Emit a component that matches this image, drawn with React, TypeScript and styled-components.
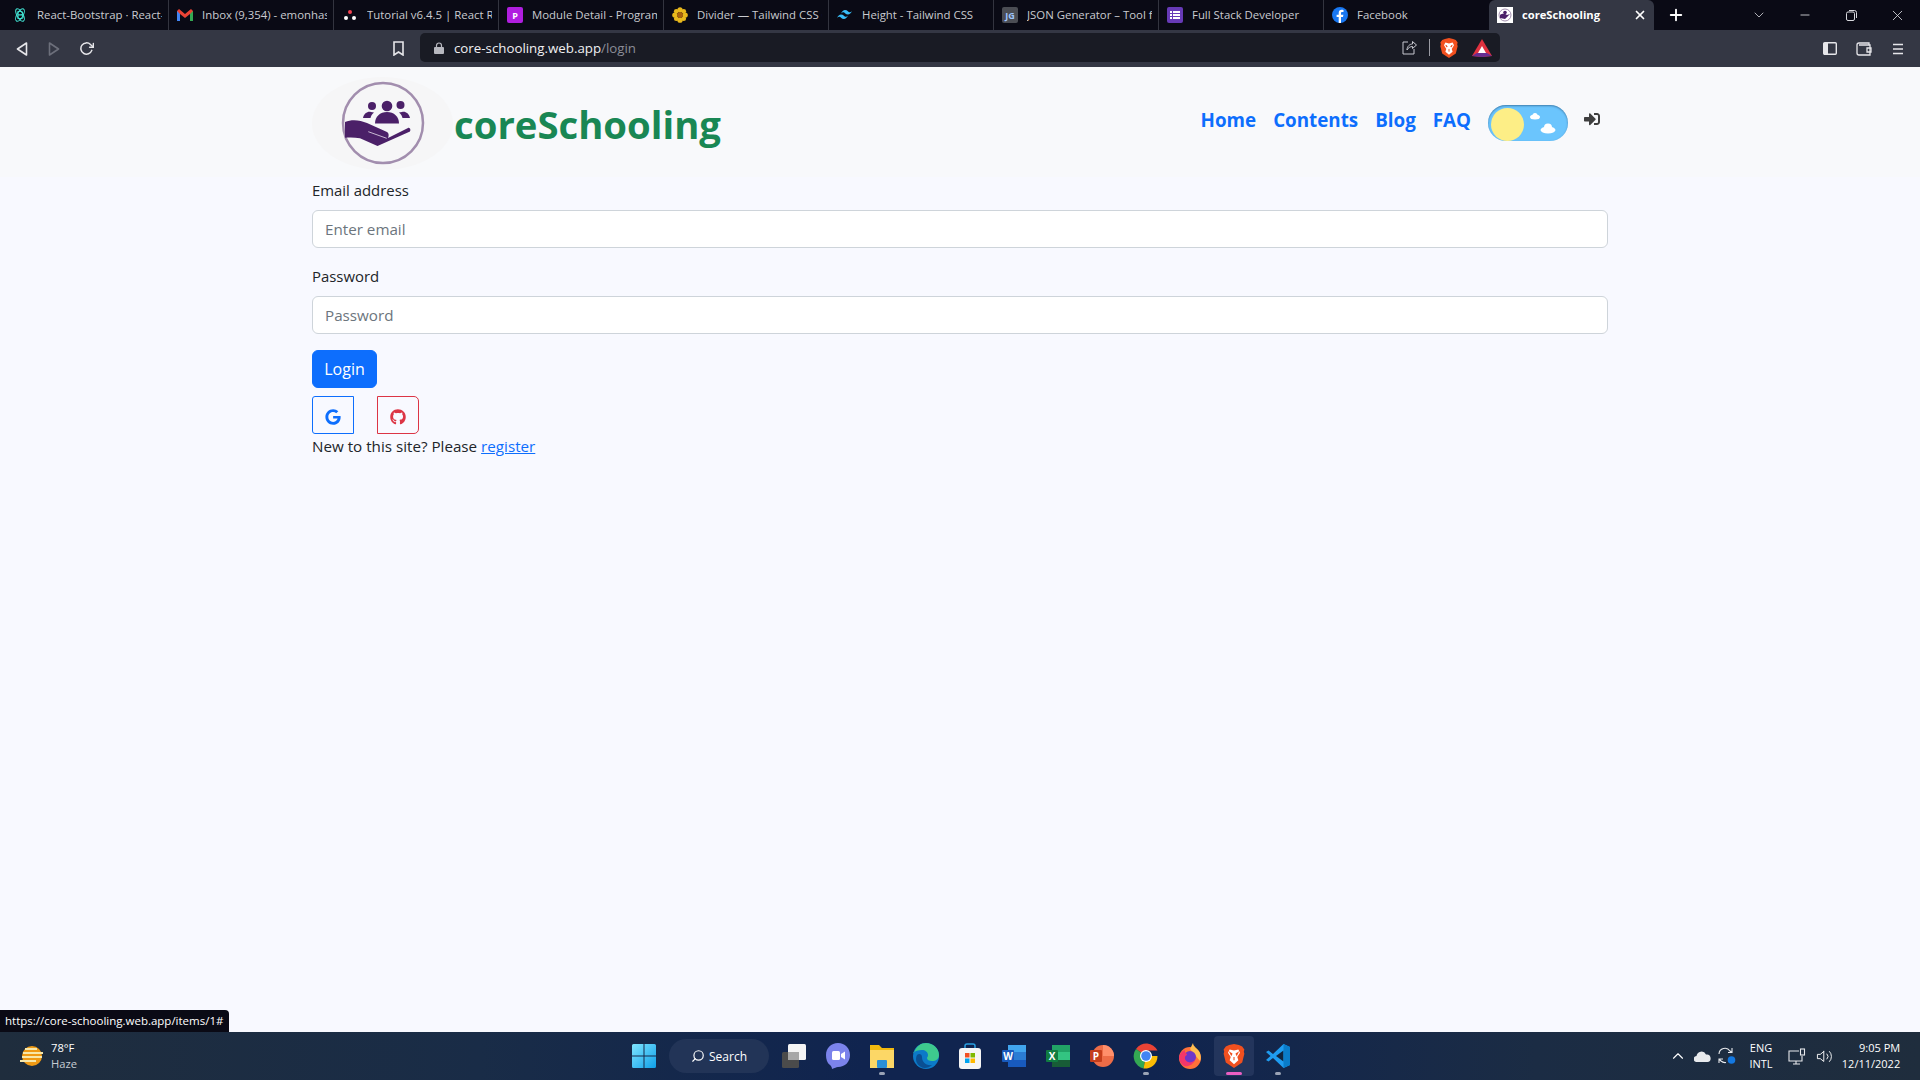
import React from "react";
import styled, { createGlobalStyle } from "styled-components";
import { FaGithub, FaGoogle, FaSignInAlt } from "react-icons/fa";
import { FiChevronDown, FiChevronUp, FiMinus, FiPlus, FiRotateCw, FiSearch, FiVolume2, FiX } from "react-icons/fi";

const UI_FONT = `"Open Sans", "Noto Sans", "Liberation Sans", sans-serif`;

const GlobalStyle = createGlobalStyle`
  html, body {
    margin: 0;
    padding: 0;
    height: 100%;
    overflow: hidden;
  }
  body {
    font-family: ${UI_FONT};
    background: #f8f9ff;
  }
  * {
    box-sizing: border-box;
  }
`;

const Screen = styled.div`
  position: relative;
  display: flex;
  flex-direction: column;
  width: 1920px;
  height: 1080px;
  overflow: hidden;
`;

/* tab strip */
const TabStrip = styled.div`
  display: flex;
  align-items: stretch;
  height: 30px;
  padding-left: 4px;
  background: #0a0a15;
  flex: none;
`;

const Tab = styled.div<{ $active?: boolean }>`
  display: flex;
  align-items: center;
  gap: 9px;
  width: 165px;
  padding: 0 6px 0 8px;
  font-size: ${p => (p.$active ? 11.2 : 11.4)}px;
  font-weight: ${p => (p.$active ? 700 : 400)};
  color: ${p => (p.$active ? "#fff" : "#c9cad0")};
  background: ${p => (p.$active ? "#343744" : "transparent")};
  border-radius: ${p => (p.$active ? "6px 6px 0 0" : "0")};
  border-right: 1px solid ${p => (p.$active ? "transparent" : "#33343f")};
  white-space: nowrap;
  overflow: hidden;

  &:nth-child(9) {
    border-right: none;
  }
`;

const TabTitle = styled.span`
  flex: 1;
  overflow: hidden;
  padding-bottom: 2px;
`;

const Favicon = styled.span`
  display: flex;
  align-items: center;
  justify-content: center;
  width: 16px;
  height: 16px;
  flex: none;
`;

const TabButton = styled.span`
  display: flex;
  align-items: center;
  justify-content: center;
  color: #fff;
  flex: none;
`;

const NewTab = styled.div`
  display: flex;
  align-items: center;
  justify-content: center;
  width: 44px;
  color: #fff;
  font-size: 18px;
`;

const WindowControls = styled.div`
  display: flex;
  align-items: center;
  margin-left: auto;
  color: #d8d9de;
`;

const WindowButton = styled.div`
  display: flex;
  align-items: center;
  justify-content: center;
  width: 46px;
  height: 30px;
  font-size: 15px;
`;

/* toolbar with address bar */
const Toolbar = styled.div`
  display: flex;
  align-items: center;
  height: 37px;
  padding: 0 0 0 13px;
  background: #343744;
  color: #e6e6ea;
  flex: none;
`;

const NavButtons = styled.div`
  display: flex;
  align-items: center;
  gap: 14px;
  width: 364px;
`;

const ToolIcon = styled.span<{ $dim?: boolean }>`
  display: flex;
  align-items: center;
  justify-content: center;
  width: 18px;
  height: 18px;
  color: ${p => (p.$dim ? "#6c6f7b" : "#e6e6ea")};
`;

const BookmarkSlot = styled.div`
  display: flex;
  justify-content: center;
  width: 43px;
`;

const AddressBar = styled.div`
  display: flex;
  align-items: center;
  gap: 10px;
  width: 1080px;
  height: 29px;
  padding: 0 8px 0 14px;
  margin-top: -2px;
  background: #191b24;
  border-radius: 5px;
  font-size: 13.3px;
`;

const UrlHost = styled.span`
  color: #f0f0f2;
`;

const UrlPath = styled.span`
  color: #8b8d97;
`;

const AddressIcons = styled.div`
  display: flex;
  align-items: center;
  gap: 9px;
  margin-left: auto;
`;

const AddressDivider = styled.span`
  width: 1px;
  height: 17px;
  margin: 0 0 0 3px;
  background: #9a9ba3;
`;

const ToolbarEnd = styled.div`
  display: flex;
  align-items: center;
  gap: 16px;
  margin-left: auto;
  padding-right: 16px;
`;

/* the site */
const Page = styled.main`
  flex: 1;
  display: flex;
  flex-direction: column;
  background: #f8f9ff;
  color: #212529;
  font-size: 15.2px;
  line-height: 24px;
`;

const HeaderBand = styled.header`
  display: flex;
  justify-content: center;
  height: 110px;
  background: #f8f9fb;
`;

const Container = styled.div`
  width: 1296px;
`;

const HeaderInner = styled(Container)`
  display: flex;
  align-items: flex-start;
  justify-content: space-between;
`;

const Brand = styled.a`
  display: flex;
  align-items: center;
  padding-top: 10px;
`;

const BrandName = styled.span`
  margin-left: 1px;
  font-size: 38.3px;
  line-height: 48px;
  font-weight: 700;
  color: #198754;
`;

const Nav = styled.nav`
  display: flex;
  align-items: flex-start;
  padding-top: 38px;
  padding-right: 8px;
`;

const NavLink = styled.a`
  margin-right: 17px;
  font-size: 18.8px;
  line-height: 30px;
  font-weight: 700;
  color: #0d6efd;
  white-space: nowrap;
`;

const SignIn = styled.span`
  display: flex;
  align-items: center;
  height: 27px;
  margin-left: 16px;
  font-size: 16px;
  color: #3f3f3f;
`;

const DayToggle = styled.div`
  position: relative;
  width: 80px;
  height: 36px;
  border-radius: 18px;
  background: #6bc5fd;
  box-shadow: inset 0 1px 2px rgba(30, 70, 110, 0.55);
  flex: none;
`;

const Sun = styled.span`
  position: absolute;
  left: 3px;
  top: 3px;
  width: 33px;
  height: 33px;
  border-radius: 50%;
  background: #fdee86;
`;

const Clouds = styled.svg`
  position: absolute;
  left: 38px;
  top: 6px;
`;

const Form = styled.form`
  display: flex;
  flex-direction: column;
`;

const Field = styled.div`
  margin-bottom: 16px;
`;

const Label = styled.label`
  display: block;
  margin-bottom: 8px;
  font-size: 14.9px;
`;

const Input = styled.input`
  display: block;
  width: 100%;
  height: 38px;
  padding: 6px 12px;
  font: inherit;
  color: #212529;
  background: #fff;
  border: 1px solid #ced4da;
  border-radius: 6px;

  &::placeholder {
    color: #6c757d;
    opacity: 1;
  }
`;

const LoginButton = styled.button`
  align-self: flex-start;
  width: 65px;
  height: 38px;
  padding: 0;
  font: inherit;
  font-size: 16px;
  color: #fff;
  background: #0d6efd;
  border: 1px solid #0d6efd;
  border-radius: 6px;
`;

const SocialRow = styled.div`
  display: flex;
  gap: 23px;
  margin-top: 8px;
`;

const SocialButton = styled.button<{ $tone: string; $radius: string }>`
  display: flex;
  align-items: center;
  justify-content: center;
  width: 42px;
  height: 38px;
  padding: 4px 0 0;
  font-size: 16px;
  color: ${p => p.$tone};
  background: transparent;
  border: 1px solid ${p => p.$tone};
  border-radius: ${p => p.$radius};
`;

const RegisterLine = styled.p`
  margin: 0;
`;

const RegisterLink = styled.a`
  color: #0d6efd;
  text-decoration: underline;
`;

const BodyWrap = styled.div`
  display: flex;
  justify-content: center;
  padding-top: 1px;
`;

const StatusBubble = styled.div`
  position: absolute;
  left: 0;
  bottom: 48px;
  height: 22px;
  padding: 0 6px 0 5px;
  font-size: 11.5px;
  line-height: 22px;
  color: #fff;
  background: #0a0a15;
  border-radius: 0 4px 0 0;
`;

/* windows taskbar */
const Taskbar = styled.footer`
  display: grid;
  grid-template-columns: 1fr auto 1fr;
  align-items: center;
  height: 48px;
  background: linear-gradient(to right, #1f2d3d 0%, #192c47 25%, #10244f 45%, #10244f 60%, #1b2c44 80%, #1f2d3d 100%);
  color: #fff;
  flex: none;
`;

const Weather = styled.div`
  display: flex;
  align-items: center;
  gap: 7px;
  padding-left: 20px;
`;

const WeatherText = styled.div`
  font-size: 11.2px;
  line-height: 16px;
`;

const WeatherSub = styled.div`
  color: #c6ccd3;
`;

const TaskIcons = styled.div`
  display: flex;
  align-items: center;
  height: 48px;
`;

const SearchPill = styled.div`
  display: flex;
  align-items: center;
  justify-content: center;
  gap: 4px;
  width: 100px;
  height: 34px;
  margin: 0 3px 0 5px;
  font-size: 12px;
  border-radius: 17px;
  background: #223457;
`;

const TaskIcon = styled.div<{ $active?: boolean }>`
  position: relative;
  display: flex;
  align-items: center;
  justify-content: center;
  width: 40px;
  height: 40px;
  margin: 0 2px;
  border-radius: 4px;
  background: ${p => (p.$active ? "#23355c" : "transparent")};
`;

const StartIcon = styled(TaskIcon)`
  margin: 0 0 0 4px;
`;

const RunDot = styled.span<{ $active?: boolean }>`
  position: absolute;
  bottom: 1px;
  left: 50%;
  width: ${p => (p.$active ? 16 : 6)}px;
  height: 3px;
  transform: translateX(-50%);
  border-radius: 2px;
  background: ${p => (p.$active ? "#ea5fc3" : "#9aa3b5")};
`;

const Tray = styled.div`
  display: flex;
  align-items: center;
  justify-content: flex-end;
  padding-right: 14px;
  font-size: 11px;
`;

const TraySlot = styled.div<{ $width: number }>`
  display: flex;
  align-items: center;
  justify-content: center;
  width: ${p => p.$width}px;
`;

const TrayStack = styled.div<{ $align: string }>`
  display: flex;
  flex-direction: column;
  align-items: ${p => p.$align};
  line-height: 16px;
`;

const Logo = ({ size = 141 }: { size?: number }) => (
  <svg width={size} height={93} viewBox="0 0 141 93" aria-hidden="true">
    <ellipse cx="70.5" cy="46.5" rx="70.5" ry="46.5" fill="#f6f6f7" />
    <circle cx="71" cy="46" r="40" fill="none" stroke="#a28eae" strokeWidth="2.5" />
    <g fill="#4b2068">
      <circle cx="60" cy="29" r="4" />
      <circle cx="88.500" cy="28" r="4" />
      <circle cx="75" cy="29" r="5.300" />
      <path d="M51 41c1-5 5-7 8-6l3 .5c-2 1.500-3 3.500-3.500 5.500z" />
      <path d="M98 41c-1-5-5-7-8-6l-3 .5c2 1.500 3 3.500 3.500 5.500z" />
      <path d="M63 46.500c0-7 5-11.500 12-11.500s12 4.500 12 11.500z" />
      <path d="M33 45c7-3 15-2 22 1l20 9c2 1 2 4 1 6l20-10c2-1 3 2 2 3.500L65.500 69 48 61.300c-5-1-10-1-15-.6z" />
    </g>
    <path d="M56.300 54.700l18.400 6.600" stroke="#e8dfee" strokeWidth="0.8" fill="none" />
  </svg>
);

const GlyphSquare = styled.span<{ $bg: string; $color?: string }>`
  display: flex;
  align-items: center;
  justify-content: center;
  width: 16px;
  height: 16px;
  font-size: 9px;
  font-weight: 700;
  color: ${p => p.$color ?? "#fff"};
  background: ${p => p.$bg};
  border-radius: 2px;
`;

const tabs: Array<[string, JSX.Element]> = [
  ["React-Bootstrap · React-", (
    <svg width="16" height="16" viewBox="0 0 16 16" fill="none" stroke="#41e0d0" strokeWidth="1.1">
      <ellipse cx="8" cy="8" rx="7" ry="3" transform="rotate(60 8 8)" />
      <ellipse cx="8" cy="8" rx="7" ry="3" transform="rotate(120 8 8)" />
      <path d="M6 4.500h3a1.600 1.600 0 010 3.400H6zm0 3.400h3.400a1.800 1.800 0 010 3.600H6z" />
    </svg>
  )],
  ["Inbox (9,354) - emonhas", (
    <svg width="16" height="14" viewBox="0 0 16 12">
      <path d="M0 2v10h3V5l5 4 5-4v7h3V2l-2-2-6 5-6-5z" fill="#ea4335" />
      <path d="M0 2v10h3V5z" fill="#4285f4" />
      <path d="M13 5v7h3V2z" fill="#34a853" />
    </svg>
  )],
  ["Tutorial v6.4.5 | React Ro", (
    <svg width="14" height="12" viewBox="0 0 14 12">
      <circle cx="7" cy="3" r="2" fill="#f44250" />
      <circle cx="3" cy="9" r="2" fill="#fff" />
      <circle cx="11" cy="9" r="2" fill="#fff" />
    </svg>
  )],
  ["Module Detail - Program", <GlyphSquare $bg="#b01ee0">P</GlyphSquare>],
  ["Divider — Tailwind CSS C", (
    <svg width="16" height="16" viewBox="0 0 16 16">
      <g fill="#e8b81c">
        <circle cx="8" cy="2.800" r="2.600" />
        <circle cx="8" cy="13.200" r="2.600" />
        <circle cx="2.800" cy="8" r="2.600" />
        <circle cx="13.200" cy="8" r="2.600" />
        <circle cx="4.300" cy="4.300" r="2.400" />
        <circle cx="11.700" cy="4.300" r="2.400" />
        <circle cx="4.300" cy="11.700" r="2.400" />
        <circle cx="11.700" cy="11.700" r="2.400" />
      </g>
      <circle cx="8" cy="8" r="3" fill="#a8620d" />
    </svg>
  )],
  ["Height - Tailwind CSS", (
    <svg width="16" height="10" viewBox="0 0 16 10">
      <path d="M4 3.500C5 1.200 6.400 0 8 0c2.600 0 3 2 4.300 2.300 1 .2 1.900-.2 2.700-1.300-1 2.300-2.400 3.500-4 3.500-2.600 0-3-2-4.300-2.300-1-.2-1.900.2-2.700 1.300zM0 8c1-2.300 2.400-3.500 4-3.500 2.600 0 3 2 4.300 2.300 1 .2 1.900-.2 2.700-1.300-1 2.300-2.400 3.500-4 3.500C4.400 9 4 7 2.700 6.700 1.700 6.500.8 6.900 0 8z" fill="#38bdf8" />
    </svg>
  )],
  ["JSON Generator – Tool fo", <GlyphSquare $bg="#4b4d54" $color="#9fc6ff">JG</GlyphSquare>],
  ["Full Stack Developer", (
    <GlyphSquare $bg="#673ab7">
      <svg width="10" height="10" viewBox="0 0 10 10" fill="#fff">
        <path d="M0 1h2v2H0zM3 1h7v2H3zM0 4h2v2H0zM3 4h7v2H3zM0 7h2v2H0zM3 7h7v2H3z" />
      </svg>
    </GlyphSquare>
  )],
  ["Facebook", (
    <svg width="16" height="16" viewBox="0 0 16 16">
      <circle cx="8" cy="8" r="8" fill="#1877f2" />
      <path d="M9 16V10h2l.4-2.300H9V6.200c0-.7.300-1.200 1.300-1.200h1.200V3c-.6-.1-1.200-.2-1.900-.2C8 2.800 6.700 4 6.700 6v1.700H4.600V10h2.100v6z" fill="#fff" />
    </svg>
  )],
];

const BraveIcon = ({ size }: { size: number }) => (
  <svg width={size} height={size} viewBox="0 0 20 22">
    <path d="M10 0l4.500 1 3 1.200L19.500 5 19 7l.5 2-2 8L10 22l-7.500-5-2-8L1 7 .5 5l2-2.800L5.500 1z" fill="#f1501f" />
    <path d="M10 6L6 5 4.500 8 7 12l-1 3 4 3.500L14 15l-1-3 2.500-4L14 5z" fill="#fff" />
    <path d="M8 9L6.500 8l1 2zm4 0l1.500-1-1 2zM10 12v3" stroke="#f1501f" strokeWidth="1" fill="none" />
  </svg>
);

const WindowsLogo = () => (
  <svg width="24" height="24" viewBox="0 0 24 24">
    <defs>
      <linearGradient id="winGrad" x1="0" y1="0" x2="1" y2="1">
        <stop offset="0" stopColor="#7fe5ff" />
        <stop offset="1" stopColor="#0f9fe8" />
      </linearGradient>
    </defs>
    <path d="M0 1.500A1.500 1.500 0 011.500 0h10v11.500H0zM12.500 0h10A1.500 1.500 0 0124 1.500v10H12.500zM0 12.500h11.500V24h-10A1.500 1.500 0 010 22.500zM12.500 12.500H24v10a1.500 1.500 0 01-1.500 1.500h-10z" fill="url(#winGrad)" />
  </svg>
);

function OfficeIcon({ letter, plate, a, b, c, round }: { letter: string; plate: string; a: string; b: string; c: string; round?: boolean }) {
  return (
    <svg width="24" height="24" viewBox="0 0 24 24">
      {round ? (
        <>
          <circle cx="13" cy="12" r="11" fill={b} />
          <path d="M13 1a11 11 0 0111 11H13z" fill={a} />
        </>
      ) : (
        <>
          <rect x="6" y="1" width="18" height="8" fill={a} />
          <rect x="6" y="8" width="18" height="8" fill={b} />
          <rect x="6" y="16" width="18" height="7" fill={c} />
        </>
      )}
      <rect x="0" y="6" width="12" height="12" rx="1" fill={plate} />
      <text x="6" y="15.500" textAnchor="middle" fontSize="10" fontWeight="700" fill="#fff" fontFamily="Open Sans, sans-serif">{letter}</text>
    </svg>
  );
}

const taskIcons: Array<{ key: string; icon: JSX.Element; running?: boolean; active?: boolean }> = [
  { key: "view", icon: (
    <svg width="24" height="24" viewBox="0 0 24 24">
      <rect x="0" y="8" width="17" height="16" rx="1.500" fill="#4b4b4b" />
      <rect x="6" y="0" width="18" height="16" rx="1.500" fill="#f4f4f4" />
      <rect x="6" y="8" width="11" height="8" fill="#a7a7a7" />
    </svg>
  ) },
  { key: "chat", icon: (
    <svg width="24" height="26" viewBox="0 0 24 26">
      <path d="M12 0c7 0 12 5 12 12s-5 12-12 12c-2 0-3 1-6 2 0-2-1-3-2-4C1 20 0 16 0 12 0 5 5 0 12 0z" fill="#7b83eb" />
      <rect x="6" y="8" width="8" height="9" rx="1.500" fill="#fff" />
      <path d="M15 11l4-2.500v8L15 14z" fill="#fff" />
    </svg>
  ) },
  { key: "files", running: true, icon: (
    <svg width="26" height="26" viewBox="0 0 26 26">
      <path d="M1 2h9l3 3h12v20H1z" fill="#f2b90f" />
      <path d="M1 7h24v18H1z" fill="#fcd766" />
      <rect x="8" y="17" width="10" height="8" rx="1" fill="#2a8fd6" />
    </svg>
  ) },
  { key: "edge", icon: (
    <svg width="26" height="26" viewBox="0 0 26 26">
      <circle cx="13" cy="13" r="13" fill="#0c7ac8" />
      <path d="M1 10C3 3 8 0 13 0c7 0 13 5 13 12 0 4-3 6-7 6-3 0-5-1-5-3 0-1 1-1 1-3 0-3-3-5-6-5-4 0-7 1-9 3z" fill="#3ec98e" />
      <path d="M9 14c0 5 4 9 10 8-3 3-8 4-11 2-5-3-6-8-4-12 2-2 5-1 5 2z" fill="#0a4f93" />
    </svg>
  ) },
  { key: "store", icon: (
    <svg width="24" height="26" viewBox="0 0 24 26">
      <path d="M7 6V3a2 2 0 012-2h6a2 2 0 012 2v3" stroke="#2a9fe0" strokeWidth="1.500" fill="none" />
      <rect x="1" y="5" width="22" height="21" rx="3" fill="#f5f5f5" />
      <path d="M7 10h4.500v4.500H7z" fill="#f25022" />
      <path d="M12.500 10H17v4.500h-4.500z" fill="#7fba00" />
      <path d="M7 15.500h4.500V20H7z" fill="#00a4ef" />
      <path d="M12.500 15.500H17V20h-4.500z" fill="#ffb900" />
    </svg>
  ) },
  { key: "word", icon: <OfficeIcon letter="W" plate="#185abd" a="#41a5ee" b="#2b7cd3" c="#185abd" /> },
  { key: "excel", icon: <OfficeIcon letter="X" plate="#107c41" a="#21a366" b="#33c481" c="#185c37" /> },
  { key: "ppt", icon: <OfficeIcon letter="P" plate="#c43e1c" a="#ff8f6b" b="#ed6c47" c="#d35230" round /> },
  { key: "chrome", running: true, icon: (
    <svg width="26" height="26" viewBox="0 0 26 26">
      <path d="M13 13L3 6a12.500 12.500 0 0121.500 1.500H13z" fill="#ea4335" />
      <path d="M13 13L3 6a12.500 12.500 0 007.500 19.500z" fill="#34a853" />
      <path d="M13 13h11.500a12.500 12.500 0 01-14 12.500z" fill="#fbbc04" />
      <circle cx="13" cy="13" r="6" fill="#fff" />
      <circle cx="13" cy="13" r="4.800" fill="#4285f4" />
    </svg>
  ) },
  { key: "firefox", icon: (
    <svg width="26" height="26" viewBox="0 0 26 26">
      <circle cx="13" cy="15" r="11" fill="#ff7139" />
      <path d="M16 0c0 4 5 5 7 10 1 3 1 6 0 8L13 6z" fill="#ffbd4f" />
      <circle cx="13" cy="14" r="6" fill="#6e36c9" />
      <path d="M2 14c1-4 3-6 6-7-1 3 2 3 2 5-3 1-3 5 1 7 2 1 5 0 7-2-2 5-7 7-11 6-3-2-5-5-5-9z" fill="#f3366a" />
    </svg>
  ) },
  { key: "brave", active: true, icon: <BraveIcon size={24} /> },
  { key: "vscode", running: true, icon: (
    <svg width="24" height="24" viewBox="0 0 24 24">
      <path d="M17.500 0L24 3v18l-6.500 3L7 14l-4.500 3.500L0 16l4.500-4L0 8l2.500-1.500L7 10z" fill="#1f9cf0" />
      <path d="M17.500 6.500L10 12l7.500 5.500z" fill="#10243f" />
      <path d="M17.500 0L24 3v18l-6.500 3z" fill="#0a7cc9" />
    </svg>
  ) },
];

function PageBody() {
  return (
    <BodyWrap>
      <Container>
        <Form onSubmit={e => e.preventDefault()}>
          <Field>
            <Label htmlFor="email">Email address</Label>
            <Input id="email" type="email" placeholder="Enter email" />
          </Field>
          <Field>
            <Label htmlFor="password">Password</Label>
            <Input id="password" type="password" placeholder="Password" />
          </Field>
          <LoginButton type="submit">Login</LoginButton>
        </Form>
        <SocialRow>
          <SocialButton type="button" $tone="#0d6efd" $radius="3px 0 0 3px"><FaGoogle /></SocialButton>
          <SocialButton type="button" $tone="#dc3545" $radius="0 5px 5px 0"><FaGithub /></SocialButton>
        </SocialRow>
        <RegisterLine>New to this site? Please <RegisterLink href="#register">register</RegisterLink></RegisterLine>
      </Container>
    </BodyWrap>
  );
}

export default function App() {
  return (
    <Screen>
      <GlobalStyle />
      <TabStrip>
        {tabs.map(([title, icon]) => (
          <Tab key={title}>
            <Favicon>{icon}</Favicon>
            <TabTitle>{title}</TabTitle>
          </Tab>
        ))}
        <Tab $active>
          <Favicon>
            <svg width="16" height="16" viewBox="0 0 16 16">
              <rect width="16" height="16" fill="#fff" />
              <circle cx="8" cy="8" r="6" fill="none" stroke="#a28eae" />
              <path d="M3 8c3-2 5-1 7 0l3-1-5 5-5-1z" fill="#4b2068" />
              <circle cx="8" cy="5.500" r="1.800" fill="#4b2068" />
            </svg>
          </Favicon>
          <TabTitle>coreSchooling</TabTitle>
          <TabButton><FiX size={14} strokeWidth={3} /></TabButton>
        </Tab>
        <NewTab><FiPlus size={18} strokeWidth={2.5} /></NewTab>
        <WindowControls>
          <WindowButton><FiChevronDown size={16} strokeWidth={1.2} /></WindowButton>
          <WindowButton><FiMinus size={14} strokeWidth={1.5} /></WindowButton>
          <WindowButton>
            <svg width="11" height="11" viewBox="0 0 11 11" fill="none" stroke="currentColor">
              <rect x="0.500" y="2" width="8" height="8.500" rx="1.500" />
              <path d="M3 .5h5.500a2 2 0 012 2V8" />
            </svg>
          </WindowButton>
          <WindowButton><FiX size={17} strokeWidth={1.2} /></WindowButton>
        </WindowControls>
      </TabStrip>

      <Toolbar>
        <NavButtons>
          <ToolIcon>
            <svg width="12" height="14" viewBox="0 0 12 14" fill="none" stroke="currentColor" strokeWidth="1.600" strokeLinejoin="round"><path d="M10.500 1L1.500 7l9 6z" /></svg>
          </ToolIcon>
          <ToolIcon $dim>
            <svg width="12" height="14" viewBox="0 0 12 14" fill="none" stroke="currentColor" strokeWidth="1.600" strokeLinejoin="round"><path d="M1.500 1l9 6-9 6z" /></svg>
          </ToolIcon>
          <ToolIcon><FiRotateCw size={15} strokeWidth={2.4} /></ToolIcon>
        </NavButtons>
        <BookmarkSlot>
          <ToolIcon>
            <svg width="11" height="15" viewBox="0 0 11 15" fill="none" stroke="currentColor" strokeWidth="1.600"><path d="M1 1h9v13l-4.500-3L1 14z" /></svg>
          </ToolIcon>
        </BookmarkSlot>
        <AddressBar>
          <svg width="10" height="12" viewBox="0 0 10 12">
            <path d="M2.500 5V3.500a2.500 2.500 0 015 0V5" fill="none" stroke="#b7b8bf" strokeWidth="1.200" />
            <rect y="5" width="10" height="7" rx="1" fill="#b7b8bf" />
          </svg>
          <span>
            <UrlHost>core-schooling.web.app</UrlHost>
            <UrlPath>/login</UrlPath>
          </span>
          <AddressIcons>
            <svg width="15" height="15" viewBox="0 0 15 15" fill="none" stroke="#c7c8cf" strokeWidth="1"><path d="M6 2H1v12h11V9" /><path d="M5 10c0-4 3-6 5.500-6V1.500L14.500 5l-4 3.500V6.500C8 6.500 6 8 5 10z" /></svg>
            <AddressDivider />
            <BraveIcon size={20} />
            <svg width="20" height="18" viewBox="0 0 20 18" style={{ marginLeft: 4 }}>
              <path d="M10 0l10 17-10 1L0 17z" fill="#e0313f" />
              <path d="M0 17l5-3h10l5 3-10 1z" fill="#662d91" />
              <path d="M10 7l4 7H6z" fill="#fff" />
            </svg>
          </AddressIcons>
        </AddressBar>
        <ToolbarEnd>
          <svg width="14" height="13" viewBox="0 0 14 13"><rect x="0.700" y="0.700" width="12.600" height="11.600" rx="1" fill="none" stroke="#e6e6ea" strokeWidth="1.400" /><rect x="1" y="1" width="4" height="11" fill="#e6e6ea" /></svg>
          <svg width="16" height="14" viewBox="0 0 16 14" fill="none" stroke="#e6e6ea" strokeWidth="1.300" style={{ marginLeft: 3 }}><path d="M13 3V1H3a2 2 0 00-2 2v8a2 2 0 002 2h11V3H3" /><path d="M15 6h-4v4h4z" /></svg>
          <svg width="12" height="12" viewBox="0 0 12 12" stroke="#e6e6ea" strokeWidth="1.400" style={{ marginLeft: 4 }}><path d="M1 1.500h10M1 6h10M1 10.500h10" /></svg>
        </ToolbarEnd>
      </Toolbar>

      <Page>
        <HeaderBand>
          <HeaderInner>
            <Brand>
              <Logo />
              <BrandName>coreSchooling</BrandName>
            </Brand>
            <Nav>
              <NavLink>Home</NavLink>
              <NavLink>Contents</NavLink>
              <NavLink>Blog</NavLink>
              <NavLink>FAQ</NavLink>
              <DayToggle>
                <Sun />
                <Clouds width="36" height="28" viewBox="0 0 36 28" fill="#fff">
                  <ellipse cx="9" cy="6" rx="5" ry="2.500" />
                  <circle cx="9" cy="4.500" r="2.500" />
                  <ellipse cx="22" cy="19" rx="7.500" ry="3.500" />
                  <circle cx="22" cy="16.500" r="4" />
                </Clouds>
              </DayToggle>
              <SignIn><FaSignInAlt /></SignIn>
            </Nav>
          </HeaderInner>
        </HeaderBand>
        <PageBody />
      </Page>

      <StatusBubble>https://core-schooling.web.app/items/1#</StatusBubble>

      <Taskbar>
        <Weather>
          <svg width="24" height="22" viewBox="0 0 24 22">
            <circle cx="12" cy="11" r="10" fill="#f09a14" />
            <path d="M5 3h12v2H5zM3 7h20v2H3zM2 11h20v2H2zM0 15h16v2H0z" fill="#f8e7a8" />
          </svg>
          <WeatherText>
            <div>78°F</div>
            <WeatherSub>Haze</WeatherSub>
          </WeatherText>
        </Weather>
        <TaskIcons>
          <StartIcon><WindowsLogo /></StartIcon>
          <SearchPill><FiSearch size={14} style={{ transform: "scaleX(-1)" }} />Search</SearchPill>
          {taskIcons.map(item => (
            <TaskIcon key={item.key} $active={item.active}>
              {item.icon}
              {(item.running || item.active) && <RunDot $active={item.active} />}
            </TaskIcon>
          ))}
        </TaskIcons>
        <Tray>
          <TraySlot $width={24}><FiChevronUp size={18} strokeWidth={1.5} /></TraySlot>
          <TraySlot $width={24}>
            <svg width="17" height="11" viewBox="0 0 17 11"><path d="M3 11a3 3 0 01-.5-6A5 5 0 0112 3.500 3.800 3.800 0 0113.500 11z" fill="#e8eaed" /></svg>
          </TraySlot>
          <TraySlot $width={26}>
            <svg width="18" height="18" viewBox="0 0 18 18" fill="none" stroke="#e8eaed" strokeWidth="1.100">
              <path d="M1 7a6 6 0 0111-3l2 1.500M14 1v4.500H10M1 16v-4h4M1 12l2 2a6 6 0 005 1.500" />
              <circle cx="13.500" cy="13" r="3.800" fill="#1478e0" stroke="none" />
            </svg>
          </TraySlot>
          <TraySlot $width={42}>
            <TrayStack $align="center">
              <span>ENG</span>
              <span>INTL</span>
            </TrayStack>
          </TraySlot>
          <TraySlot $width={30}>
            <svg width="18" height="17" viewBox="0 0 18 17" fill="none" stroke="#e8eaed" strokeWidth="1.100">
              <path d="M11 3H1v10h13V8M5 16h7M8 13v3" />
              <rect x="12.500" y="1" width="4" height="6" />
            </svg>
          </TraySlot>
          <TraySlot $width={24}><FiVolume2 size={17} strokeWidth={1.3} /></TraySlot>
          <TraySlot $width={70}>
            <TrayStack $align="flex-end">
              <span>9:05 PM</span>
              <span>12/11/2022</span>
            </TrayStack>
          </TraySlot>
        </Tray>
      </Taskbar>
    </Screen>
  );
}
